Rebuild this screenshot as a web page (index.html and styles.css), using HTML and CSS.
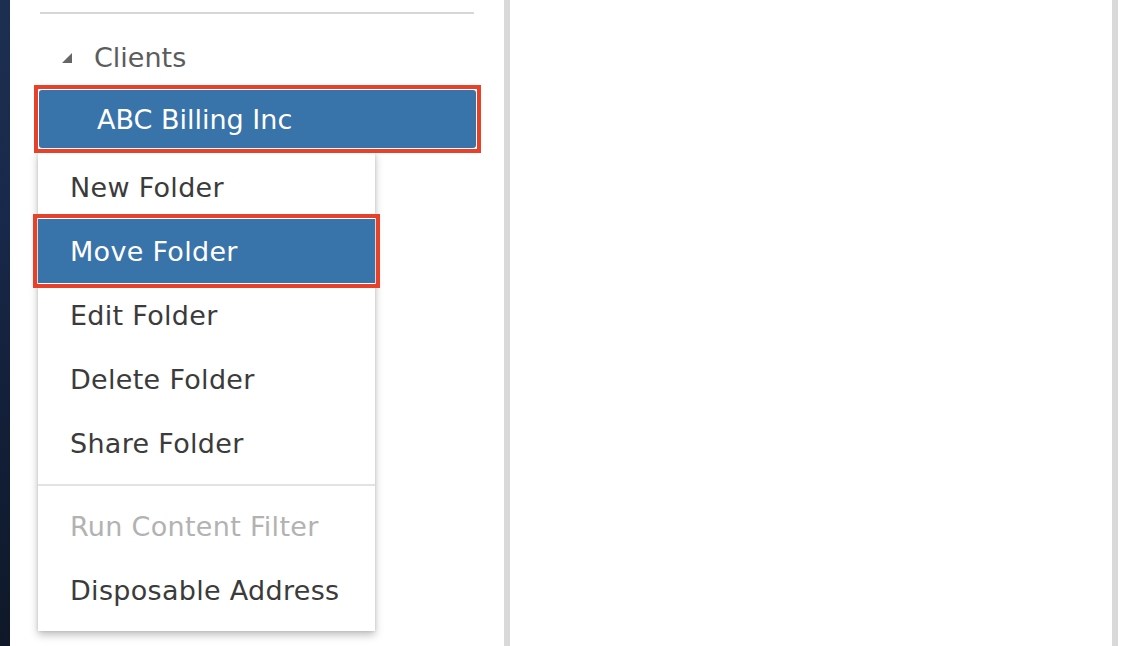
FILE: index.html
```html
<!DOCTYPE html>
<html lang="en">
<head>
<meta charset="utf-8">
<title>Folders</title>
<link rel="stylesheet" href="styles.css">
</head>
<body>
<div class="page">
  <div class="desk"></div>
  <aside class="sidebar">
    <div class="rule"></div>
    <div class="tree">
      <div class="node">
        <span class="twisty"></span>
        <span class="node-label">Clients</span>
      </div>
      <div class="node-row selected">ABC Billing Inc</div>
    </div>
    <ul class="menu">
      <li class="menu-item">New Folder</li>
      <li class="menu-item active">Move Folder</li>
      <li class="menu-item">Edit Folder</li>
      <li class="menu-item">Delete Folder</li>
      <li class="menu-item">Share Folder</li>
      <li class="menu-sep"></li>
      <li class="menu-item disabled">Run Content Filter</li>
      <li class="menu-item">Disposable Address</li>
    </ul>
  </aside>
  <div class="divider"></div>
  <main class="content"></main>
  <div class="divider"></div>
  <div class="rest"></div>
</div>
</body>
</html>
```

FILE: styles.css
```css
* { box-sizing: border-box; }
html, body { margin: 0; padding: 0; background: #fff; }
body {
  font-family: "DejaVu Sans", "Liberation Sans", sans-serif;
  font-size: 27px;
}
.page {
  display: flex;
  width: 1138px;
  height: 646px;
  overflow: hidden;
}
.desk {
  width: 10px;
  flex: none;
  background: linear-gradient(180deg, #1d2f50 0%, #18284a 35%, #13203a 60%, #0e1828 100%);
}
.sidebar {
  position: relative;
  width: 494px;
  flex: none;
  padding: 12px 28px 0 29px;
  background: #fff;
}
.rule {
  height: 2px;
  margin: 0 2px 0 1px;
  background: #d6d6d6;
}
.tree {
  display: flex;
  flex-direction: column;
}
.node {
  display: flex;
  align-items: center;
  height: 54px;
  margin-top: 16px;
  padding-left: 23px;
  color: #5c5c5c;
}
.twisty {
  width: 0;
  height: 0;
  border-style: solid;
  border-width: 0 0 10px 10px;
  border-color: transparent transparent #666 transparent;
  margin-right: 22px;
  margin-top: 2px;
}
.node-row {
  position: relative;
  height: 58px;
  margin-top: 6px;
  padding-left: 58px;
  display: flex;
  align-items: center;
  color: #fff;
  z-index: 3;
}
.selected {
  background: #3873aa;
  border-radius: 3px;
}
.selected::after,
.active::after {
  content: "";
  position: absolute;
  inset: -5px;
  border: 4px solid #e8412a;
  pointer-events: none;
}
.menu {
  position: absolute;
  left: 28px;
  top: 151px;
  width: 337px;
  margin: 0;
  padding: 4px 0 9px;
  list-style: none;
  background: #fff;
  box-shadow: 0 4px 8px rgba(0, 0, 0, 0.25), 0 0 3px rgba(0, 0, 0, 0.12);
  z-index: 2;
}
.menu-item {
  position: relative;
  height: 64px;
  line-height: 65px;
  padding-left: 32px;
  color: #3b3b3b;
  letter-spacing: 0.3px;
  white-space: nowrap;
}
.menu-item.active {
  background: #3873aa;
  color: #fff;
}
.menu-item.disabled {
  color: #b2b2b2;
}
.menu-sep {
  height: 2px;
  margin: 9px 0 8px;
  background: #e2e2e2;
}
.divider {
  width: 6px;
  flex: none;
  background: #d9d9d9;
}
.content {
  width: 602px;
  flex: none;
  background: #fff;
}
.rest {
  flex: 1;
  background: #fff;
}
```
